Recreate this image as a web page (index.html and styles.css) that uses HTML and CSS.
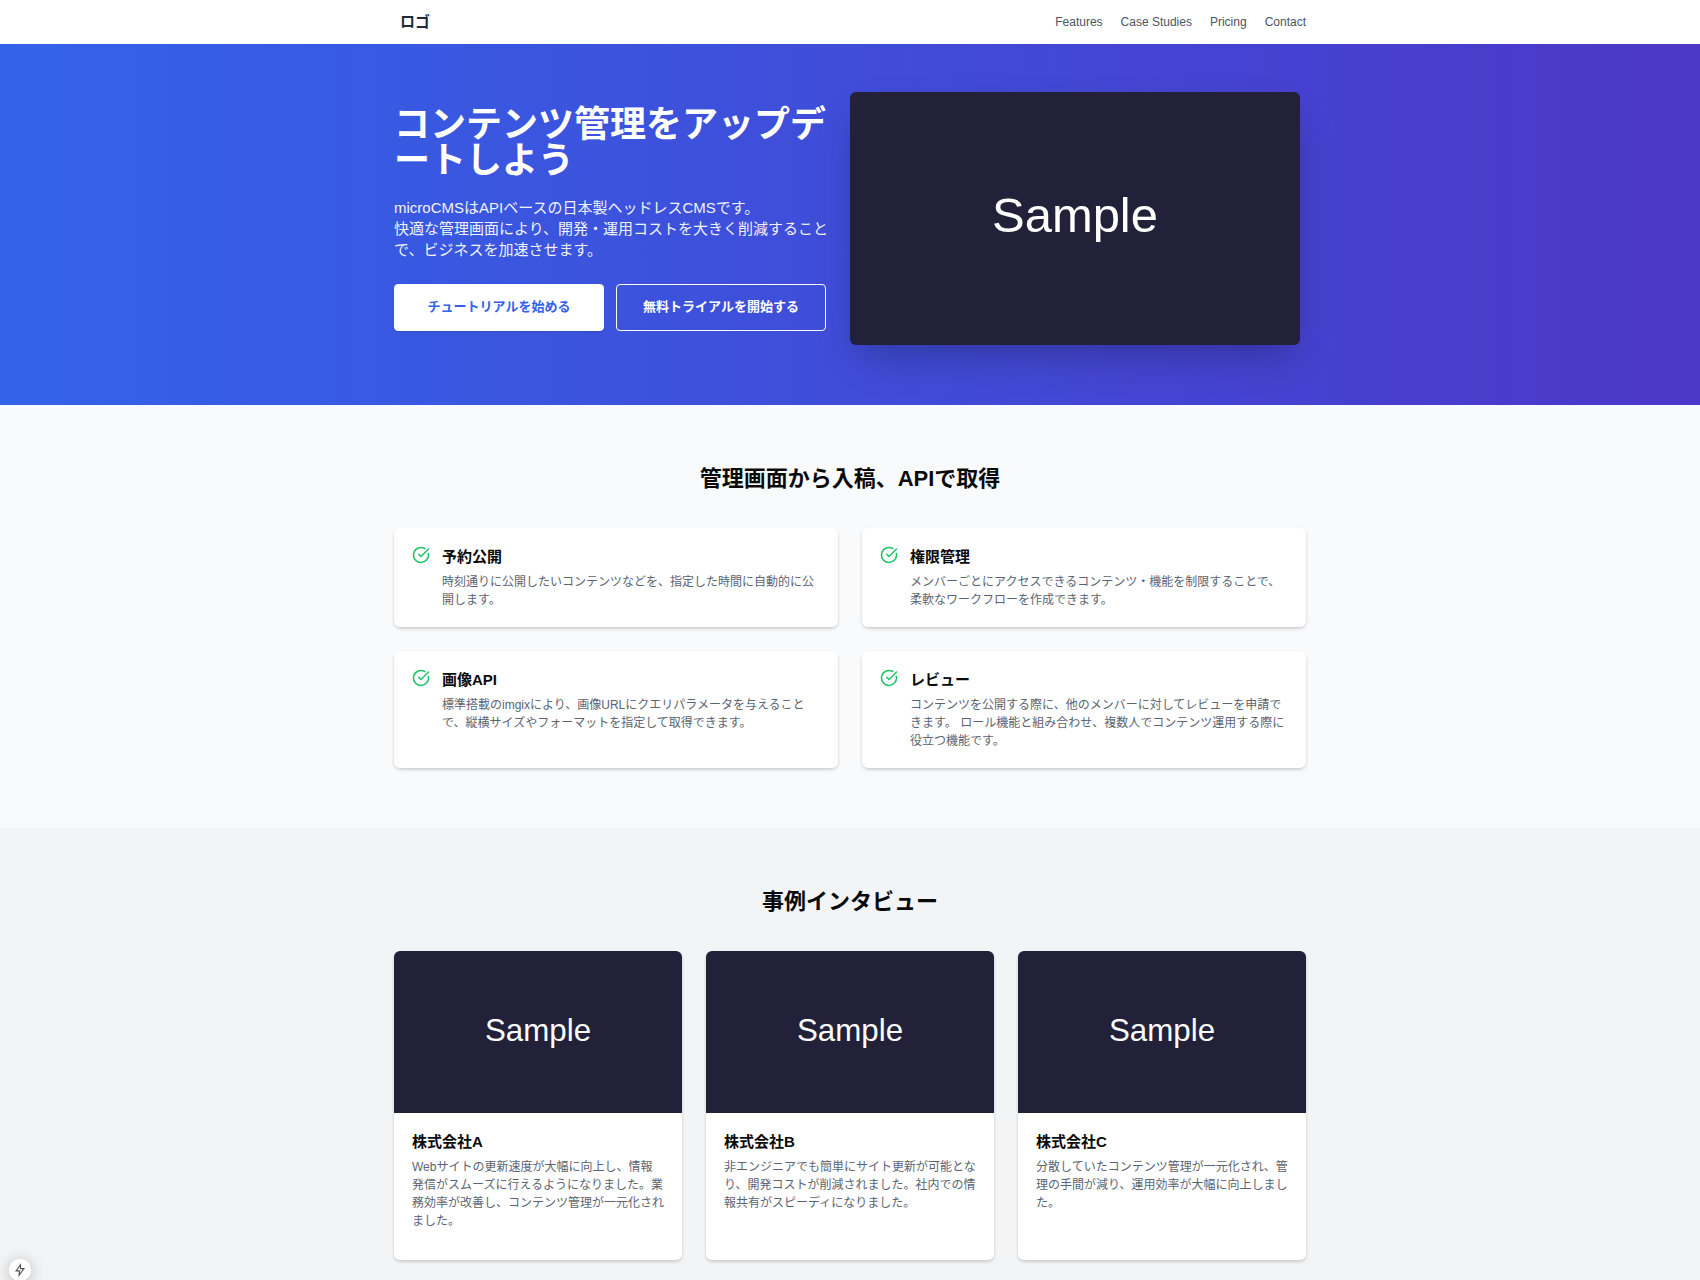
FILE: index.html
```html
<!DOCTYPE html>
<html lang="ja">
<head>
    <meta charset="UTF-8">
    <meta name="viewport" content="width=device-width, initial-scale=1.0">
    <title>コンテンツ管理をアップデートしよう</title>
    <link rel="stylesheet" href="styles.css">
</head>
<body>
    <header class="header">
        <div class="container header-inner">
            <a href="#" class="logo">ロゴ</a>
            <nav class="nav">
                <a href="#features">Features</a>
                <a href="#cases">Case Studies</a>
                <a href="#pricing">Pricing</a>
                <a href="#contact">Contact</a>
            </nav>
        </div>
    </header>

    <main>
        <section class="hero">
            <div class="container hero-inner">
                <div class="hero-text">
                    <h1>コンテンツ管理をアップデートしよう</h1>
                    <p>microCMSはAPIベースの日本製ヘッドレスCMSです。<br>快適な管理画面により、開発・運用コストを大きく削減することで、ビジネスを加速させます。</p>
                    <div class="hero-buttons">
                        <button type="button" class="btn btn-primary">チュートリアルを始める</button>
                        <button type="button" class="btn btn-outline">無料トライアルを開始する</button>
                    </div>
                </div>
                <div class="hero-image">
                    <svg class="sample" viewBox="0 0 800 450"><text x="400" y="249">Sample</text></svg>
                </div>
            </div>
        </section>

        <section class="section features" id="features">
            <div class="container">
                <h2>管理画面から入稿、APIで取得</h2>
                <div class="feature-grid">
                    <div class="card feature">
                        <svg class="check" viewBox="0 0 24 24"><path d="M21.801 10A10 10 0 1 1 17 3.335"/><path d="m9 11 3 3L22 4"/></svg>
                        <div>
                            <h3>予約公開</h3>
                            <p>時刻通りに公開したいコンテンツなどを、指定した時間に自動的に公開します。</p>
                        </div>
                    </div>
                    <div class="card feature">
                        <svg class="check" viewBox="0 0 24 24"><path d="M21.801 10A10 10 0 1 1 17 3.335"/><path d="m9 11 3 3L22 4"/></svg>
                        <div>
                            <h3>権限管理</h3>
                            <p>メンバーごとにアクセスできるコンテンツ・機能を制限することで、柔軟なワークフローを作成できます。</p>
                        </div>
                    </div>
                    <div class="card feature">
                        <svg class="check" viewBox="0 0 24 24"><path d="M21.801 10A10 10 0 1 1 17 3.335"/><path d="m9 11 3 3L22 4"/></svg>
                        <div>
                            <h3>画像API</h3>
                            <p>標準搭載のimgixにより、画像URLにクエリパラメータを与えることで、縦横サイズやフォーマットを指定して取得できます。</p>
                        </div>
                    </div>
                    <div class="card feature">
                        <svg class="check" viewBox="0 0 24 24"><path d="M21.801 10A10 10 0 1 1 17 3.335"/><path d="m9 11 3 3L22 4"/></svg>
                        <div>
                            <h3>レビュー</h3>
                            <p>コンテンツを公開する際に、他のメンバーに対してレビューを申請できます。 ロール機能と組み合わせ、複数人でコンテンツ運用する際に役立つ機能です。</p>
                        </div>
                    </div>
                </div>
            </div>
        </section>

        <section class="section cases" id="cases">
            <div class="container">
                <h2>事例インタビュー</h2>
                <div class="case-grid">
                    <article class="card case">
                        <svg class="sample" viewBox="0 0 800 450"><text x="400" y="249">Sample</text></svg>
                        <div class="case-body">
                            <h3>株式会社A</h3>
                            <p>Webサイトの更新速度が大幅に向上し、情報発信がスムーズに行えるようになりました。業務効率が改善し、コンテンツ管理が一元化されました。</p>
                        </div>
                    </article>
                    <article class="card case">
                        <svg class="sample" viewBox="0 0 800 450"><text x="400" y="249">Sample</text></svg>
                        <div class="case-body">
                            <h3>株式会社B</h3>
                            <p>非エンジニアでも簡単にサイト更新が可能となり、開発コストが削減されました。社内での情報共有がスピーディになりました。</p>
                        </div>
                    </article>
                    <article class="card case">
                        <svg class="sample" viewBox="0 0 800 450"><text x="400" y="249">Sample</text></svg>
                        <div class="case-body">
                            <h3>株式会社C</h3>
                            <p>分散していたコンテンツ管理が一元化され、管理の手間が減り、運用効率が大幅に向上しました。</p>
                        </div>
                    </article>
                </div>
            </div>
        </section>
    </main>

    <button type="button" class="dev-badge" aria-label="Dev tools">
        <svg viewBox="0 0 16 16"><path d="M8.500 2 3.500 9H7.500L7 14l5.500-7.500h-4z"/></svg>
    </button>
</body>
</html>
```
FILE: styles.css
```css
* {
    box-sizing: border-box;
    margin: 0;
    padding: 0;
}
body {
    font-family: "Liberation Sans", "Noto Sans CJK JP", sans-serif;
    font-size: 12px;
    line-height: 18px;
    color: #0a0a0a;
    background: #fff;
}
a {
    color: inherit;
    text-decoration: none;
}
.container {
    max-width: 960px;
    margin: 0 auto;
    padding: 0 24px;
}

/* header */
.header-inner {
    display: flex;
    align-items: center;
    justify-content: space-between;
    height: 44px;
}
.logo {
    padding-left: 6px;
    padding-bottom: 2px;
    font-size: 15px;
    font-weight: bold;
    line-height: 21px;
    color: #1f2937;
}
.nav {
    display: flex;
    gap: 18px;
    color: #4b5563;
}
.nav a:hover {
    color: #111827;
}

/* hero */
.hero {
    padding: 48px 0 60px;
    color: #fff;
    background: linear-gradient(to right, #3363e9, #4c37c8);
}
.hero-inner {
    display: grid;
    grid-template-columns: 1fr 1fr;
    align-items: center;
}
.hero-text {
    padding-right: 18px;
}
.hero h1 {
    margin-bottom: 18px;
    font-size: 36px;
    line-height: 36px;
}
.hero p {
    margin-bottom: 24px;
    font-size: 15px;
    line-height: 21px;
    color: #f0f3fd;
}
.hero-buttons {
    display: flex;
    gap: 12px;
}
.btn {
    flex: 0 1 210px;
    height: 47px;
    padding-bottom: 3px;
    border: 1px solid #fff;
    border-radius: 4px;
    font-family: inherit;
    font-size: 13px;
    font-weight: bold;
    cursor: pointer;
}
.btn-primary {
    color: #3363e9;
    background: #fff;
    box-shadow: 0 1px 2px rgba(0, 0, 0, 0.1);
}
.btn-outline {
    color: #fff;
    background: transparent;
}
.hero-image {
    padding-right: 6px;
}
.sample {
    display: block;
    width: 100%;
    background: #222139;
}
.sample text {
    fill: #fff;
    font-size: 87px;
    text-anchor: middle;
}
.hero-image .sample {
    border-radius: 6px;
    box-shadow: 0 18px 36px -8px rgba(0, 0, 0, 0.25);
}

/* sections */
.section {
    padding: 60px 0;
}
.section h2 {
    margin-bottom: 36px;
    font-size: 22px;
    line-height: 27px;
    text-align: center;
}
.features {
    background: #f9fafc;
}
.cases {
    padding-bottom: 20px;
    background: #f3f4f6;
}
.card {
    background: #fff;
    border-radius: 6px;
    box-shadow: 0 2px 4px -1px rgba(0, 0, 0, 0.2), 0 1px 3px rgba(0, 0, 0, 0.06);
}
.card h3 {
    margin-bottom: 6px;
    font-size: 15px;
    line-height: 21px;
}
.card p {
    color: #5b6472;
}
.feature-grid {
    display: grid;
    grid-template-columns: repeat(2, 1fr);
    gap: 24px;
}
.feature {
    display: flex;
    gap: 12px;
    padding: 18px;
}
.check {
    flex: none;
    width: 18px;
    height: 18px;
    fill: none;
    stroke: #1fc366;
    stroke-width: 2;
    stroke-linecap: round;
    stroke-linejoin: round;
}
.case-grid {
    display: grid;
    grid-template-columns: repeat(3, 1fr);
    gap: 24px;
}
.case {
    overflow: hidden;
}
.case-body {
    padding: 18px 18px 30px;
}

/* floating badge */
.dev-badge {
    position: fixed;
    left: 9px;
    bottom: -1px;
    display: flex;
    align-items: center;
    justify-content: center;
    width: 22px;
    height: 22px;
    border: none;
    border-radius: 50%;
    background: #fff;
    box-shadow: 0 2px 16px rgba(0, 0, 0, 0.25);
}
.dev-badge svg {
    width: 14px;
    height: 14px;
    fill: none;
    stroke: #555;
    stroke-width: 1.3;
}
```
